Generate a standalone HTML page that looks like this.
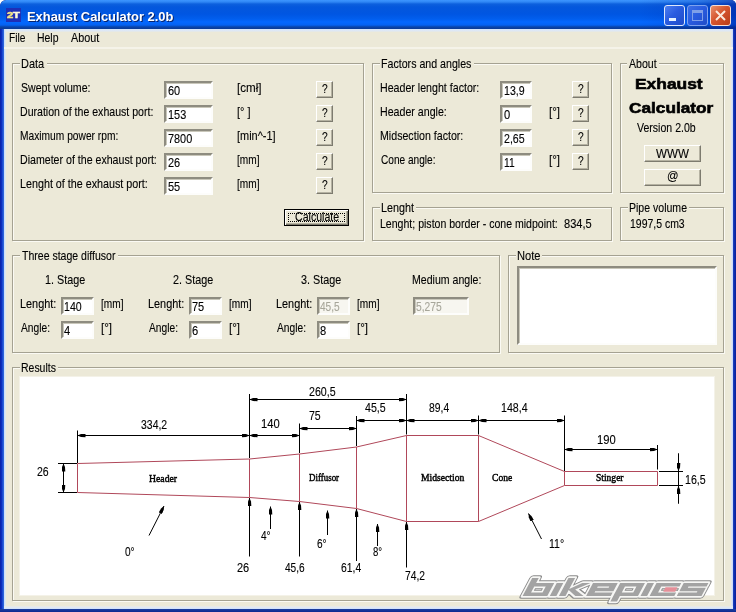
<!DOCTYPE html>
<html><head><meta charset="utf-8"><title>Exhaust Calculator 2.0b</title>
<style>
html,body{margin:0;padding:0;background:#fff;overflow:hidden}
body{width:736px;height:612px;position:relative;font-family:"Liberation Sans",sans-serif;font-size:13px}
#win{position:absolute;left:0;top:0;width:736px;height:612px;background:#0c2a9c;border-radius:6px 5px 0 0;overflow:hidden}
#title{position:absolute;left:0;top:0;width:736px;height:29px;border-radius:6px 5px 0 0;
 background:linear-gradient(to bottom,#3d95ff 0px,#2f86f4 2px,#0d60de 4px,#0457dc 7px,#0056e2 14px,#015eee 19px,#0468ff 22px,#0462f2 25px,#0a44a8 27px,#0a3a96 29px)}
#bl{position:absolute;left:0;top:29px;width:4px;height:583px;background:linear-gradient(to right,#0a1fa4,#0b2fc0 40%,#2a60da 80%,#2f68de)}
#br{position:absolute;left:733px;top:29px;width:3px;height:583px;background:linear-gradient(to right,#1c44c4,#0a28a8 60%,#0a1f98)}
#bb{position:absolute;left:0;top:609px;width:736px;height:3px;background:linear-gradient(to bottom,#1c3fa0,#0c2a90)}
#client{position:absolute;left:4px;top:29px;width:729px;height:580px;background:#ece9d8}
#menuline{position:absolute;left:4px;top:47px;width:729px;height:2px;background:#f5f3e9}
.edgeL{position:absolute;left:4px;top:29px;width:2px;height:580px;background:linear-gradient(to right,#c4dcfa,#e4ebee)}
.edgeR{position:absolute;left:731px;top:29px;width:2px;height:580px;background:linear-gradient(to right,#e8eaf0,#c4d6f6)}
.edgeT{position:absolute;left:4px;top:29px;width:729px;height:3px;background:linear-gradient(to bottom,#d4e6fd,#dfe8f4 60%,#e8e9e0)}
.edgeB{position:absolute;left:4px;top:606px;width:729px;height:3px;background:linear-gradient(to bottom,#eaeae2,#e0e8f4 50%,#cfe0fb)}
.grp{position:absolute;border:1px solid #a5a292;box-shadow:1px 1px 0 #fbfaf4, inset 1px 1px 0 #fbfaf4;box-sizing:content-box}
.glab{position:absolute;background:#ece9d8}
#txt{position:absolute;left:0;top:0;width:736px;height:612px;will-change:transform}
.t{position:absolute;white-space:pre;transform-origin:0 0;line-height:normal;display:block;-webkit-text-stroke:0.12px currentColor}
.inp{position:absolute;background:#fff;border-style:solid;border-width:2px;border-color:#8e8c80 #fdfdfb #fdfdfb #8e8c80;box-shadow:inset 1px 1px 0 #c9c7ba}
.inp.dis{background:#f7f6f0}
.btn{position:absolute;box-sizing:border-box;background:#ece9d8;border-style:solid;border-width:1px;border-color:#fff #7d7b6f #7d7b6f #fff;box-shadow:inset -1px -1px 0 #b5b2a2}
.btn.def{border:1px solid #000;box-shadow:inset 1px 1px 0 #fff, inset -1px -1px 0 #7d7b6f, inset -2px -2px 0 #b5b2a2}
.focus{position:absolute;border:1px dotted #000;box-sizing:border-box}
.panel{position:absolute;background:#fff;box-shadow:0 0 0 1px #f4f2e8}
.cap{position:absolute;top:5px;width:21px;height:21px;box-sizing:border-box;border:1px solid #dfe8fb;border-radius:3px}
#bmin{left:664px;background:linear-gradient(135deg,#4d7ff0 0%,#2a5ce0 45%,#1f4cc8 100%)}
#bmax{left:687px;background:linear-gradient(135deg,#3d6fe6 0%,#2a5ce0 45%,#1f4cc8 100%);border-color:#7fa2ee}
#bclose{left:710px;background:linear-gradient(135deg,#e8906c 0%,#d5552e 45%,#b83c18 100%);border-color:#f6ddd4}
#icon{position:absolute;left:6px;top:7.5px;width:15.3px;height:14px;background:#1f2fb6}
svg{position:absolute;left:0;top:0}
</style></head>
<body>
<div id="win">
 <div id="title"></div>
 <div style="position:absolute;left:640px;top:0;width:96px;height:29px;background:linear-gradient(to right,rgba(0,20,150,0) 0%,rgba(0,25,150,0.18) 60%,rgba(0,20,140,0.5) 100%)"></div>
 <div id="bl"></div><div id="br"></div><div id="bb"></div>
 <div id="client"></div>
 <div class="edgeT"></div><div class="edgeL"></div><div class="edgeR"></div><div class="edgeB"></div>
 <div id="menuline"></div>
 <div id="icon"></div>
 <span class="t" style="left:6.8px;top:9.9px;font-size:9px;font-weight:bold;color:#f3e684;transform:scaleX(1.25);-webkit-text-stroke:0.5px #f3e684;will-change:transform">2</span>
 <span class="t" style="left:13.4px;top:9.9px;font-size:9px;font-weight:bold;color:#fbf8d8;transform:scaleX(1.25);-webkit-text-stroke:0.5px #fbf8d8;will-change:transform">T</span>
 <div class="cap" id="bmin"><div style="position:absolute;left:4px;top:12px;width:7px;height:3px;background:#e8f4ff"></div></div>
 <div class="cap" id="bmax"><div style="position:absolute;left:4px;top:4px;width:11px;height:11px;box-sizing:border-box;border:1px solid #7f9fe8;border-top-width:3px"></div></div>
 <div class="cap" id="bclose"><svg width="19" height="19" viewBox="0 0 19 19" style="left:0;top:0"><path d="M5 5 L14 14 M14 5 L5 14" stroke="#fbe9dc" stroke-width="2" fill="none"/></svg></div>
<div class="grp" style="left:12px;top:63px;width:350px;height:176px"></div>
<div class="glab" style="left:19.5px;top:56px;width:27px;height:14px"></div>
<div class="grp" style="left:372px;top:63px;width:238px;height:128px"></div>
<div class="glab" style="left:379.5px;top:56px;width:94px;height:14px"></div>
<div class="grp" style="left:620px;top:63px;width:102px;height:128px"></div>
<div class="glab" style="left:627px;top:56px;width:32px;height:14px"></div>
<div class="grp" style="left:372px;top:207px;width:238px;height:32px"></div>
<div class="glab" style="left:379.5px;top:200px;width:36.5px;height:14px"></div>
<div class="grp" style="left:620px;top:207px;width:102px;height:32px"></div>
<div class="glab" style="left:627.5px;top:200px;width:61px;height:14px"></div>
<div class="grp" style="left:12px;top:255px;width:486px;height:96px"></div>
<div class="glab" style="left:19.5px;top:248px;width:98px;height:14px"></div>
<div class="grp" style="left:508px;top:255px;width:214px;height:96px"></div>
<div class="glab" style="left:515.5px;top:248px;width:26.5px;height:14px"></div>
<div class="grp" style="left:12px;top:367px;width:710px;height:232px"></div>
<div class="glab" style="left:19.5px;top:360px;width:38.5px;height:14px"></div>
<div class="inp" style="left:164px;top:81px;width:45px;height:14px"></div>
<div class="btn" style="left:316px;top:81px;width:17px;height:17px"></div>
<div class="inp" style="left:164px;top:105px;width:45px;height:14px"></div>
<div class="btn" style="left:316px;top:105px;width:17px;height:17px"></div>
<div class="inp" style="left:164px;top:129px;width:45px;height:14px"></div>
<div class="btn" style="left:316px;top:129px;width:17px;height:17px"></div>
<div class="inp" style="left:164px;top:153px;width:45px;height:14px"></div>
<div class="btn" style="left:316px;top:153px;width:17px;height:17px"></div>
<div class="inp" style="left:164px;top:177px;width:45px;height:14px"></div>
<div class="btn" style="left:316px;top:177px;width:17px;height:17px"></div>
<div class="btn def" style="left:284px;top:209px;width:65px;height:17px"></div>
<div class="inp" style="left:500px;top:81px;width:28px;height:14px"></div>
<div class="btn" style="left:572px;top:81px;width:17px;height:17px"></div>
<div class="inp" style="left:500px;top:105px;width:28px;height:14px"></div>
<div class="btn" style="left:572px;top:105px;width:17px;height:17px"></div>
<div class="inp" style="left:500px;top:129px;width:28px;height:14px"></div>
<div class="btn" style="left:572px;top:129px;width:17px;height:17px"></div>
<div class="inp" style="left:500px;top:153px;width:28px;height:14px"></div>
<div class="btn" style="left:572px;top:153px;width:17px;height:17px"></div>
<div class="btn" style="left:644px;top:145px;width:57px;height:17px"></div>
<div class="btn" style="left:644px;top:169px;width:57px;height:17px"></div>
<div class="inp" style="left:60.5px;top:297px;width:29.0px;height:14px"></div>
<div class="inp" style="left:60.5px;top:321px;width:29.0px;height:14px"></div>
<div class="inp" style="left:188.5px;top:297px;width:29.0px;height:14px"></div>
<div class="inp" style="left:188.5px;top:321px;width:29.0px;height:14px"></div>
<div class="inp dis" style="left:316.5px;top:297px;width:29.0px;height:14px"></div>
<div class="inp" style="left:316.5px;top:321px;width:29.0px;height:14px"></div>
<div class="inp dis" style="left:412.5px;top:297px;width:52.0px;height:14px"></div>
<div class="inp" style="left:517px;top:266px;width:196px;height:75px"></div>
<div class="panel" style="left:20px;top:377px;width:694px;height:218px"></div>
 <div class="focus" style="left:288px;top:213px;width:57px;height:9px"></div>
<svg width="736" height="612" viewBox="0 0 736 612">
<defs>
 <marker id="ah" viewBox="0 0 8 4" refX="8" refY="2" markerWidth="8" markerHeight="4" orient="auto-start-reverse" markerUnits="userSpaceOnUse"><path d="M0 0.2 L4.5 0.5 L8 2 L4.5 3.5 L0 3.8 Z" fill="#000"/></marker>
</defs>
<g stroke="#b0485a" stroke-width="1" fill="none" shape-rendering="auto">
 <path d="M77.5 463.5 L249.5 459 L299.5 454 L356.5 447 L406.5 435.5 L478.5 435.5 L564.5 471.5 L657.5 471.5 L657.5 485.5 L564.5 485.5 L478.5 521.5 L406.5 521.5 L356.5 508.5 L299.5 501.5 L249.5 497.5 L77.5 492.5 Z"/>
 <path d="M249.5 459 V497.5 M299.5 454 V501.5 M356.5 447 V508.5 M406.5 435.5 V521.5 M478.5 435.5 V521.5 M564.5 471.5 V485.5"/>
</g>
<g stroke="#000" stroke-width="1" fill="none">
 <!-- extension lines -->
 <path d="M77.5 430.5 V463 M249.5 394 V458 M299.5 423.5 V453 M356.5 416 V446 M406.5 394 V434.5 M478.5 415.5 V434.5 M564.5 415.5 V471 M657.5 445 V469.5"/>
 <!-- lower leaders -->
 <path d="M249.5 498.5 V556.5 M299.5 502.5 V556.5 M356.5 509.5 V561 M406.5 522.5 V567.5"/>
 <!-- 26 / 16,5 ticks -->
 <path d="M58 463.5 H77 M58 492.5 H77 M63.5 463.5 V492.5 M659 471.5 H683 M659 485.5 H683 M678.5 453.5 V503.5"/>
</g>
<g stroke="#000" stroke-width="1" fill="none" marker-start="url(#ah)" marker-end="url(#ah)">
 <path d="M77.5 435.5 H249.5"/><path d="M249.5 399.5 H406.5"/><path d="M249.5 435.5 H299.5"/><path d="M299.5 428.5 H356.5"/>
 <path d="M356.5 420.5 H406.5"/><path d="M406.5 420.5 H478.5"/><path d="M478.5 420.5 H564.5"/><path d="M564.5 449.5 H657.5"/>
 <path d="M63.5 463.5 V492.5"/>
</g>
<g stroke="#000" stroke-width="1" fill="none" marker-end="url(#ah)">
 <path d="M249.5 520 V498"/><path d="M299.5 520 V502"/><path d="M356.5 520 V509"/><path d="M406.5 540 V522"/>
 <path d="M270.5 529 V506.5"/><path d="M327.5 535 V510.5"/><path d="M377.5 546 V524"/>
 <path d="M149 535.5 L164 506"/><path d="M541.5 539 L528.5 513.5"/>
 <path d="M678.5 453.5 V471"/><path d="M678.5 503.5 V486"/>
</g>
</svg>

<svg width="736" height="612" viewBox="0 0 736 612">
<g transform="translate(520.0,596.0) skewX(-28)" stroke-linejoin="round">
 <path d="M2.60 -18.00 H9.20 V0.00 H2.60 Z M20.70 -13.00 H27.30 V0.00 H20.70 Z M2.60 -13.00 H27.30 V-9.60 H2.60 Z M2.60 -3.40 H27.30 V0.00 H2.60 Z M29.80 -13.00 H36.40 V0.00 H29.80 Z M38.90 -18.00 H45.50 V0.00 H38.90 Z M45.50 -7.00 L55.30 -13.00 L63.60 -13.00 L51.70 -6.50 L63.60 0.00 L55.30 0.00 L45.50 -6.00 Z M66.10 -13.00 H72.70 V0.00 H66.10 Z M66.10 -13.00 H90.80 V-9.60 H66.10 Z M66.10 -3.40 H90.80 V0.00 H66.10 Z M66.10 -8.20 H90.80 V-4.80 H66.10 Z M84.20 -13.00 H90.80 V-4.80 H84.20 Z M93.30 -13.00 H99.90 V5.50 H93.30 Z M111.40 -13.00 H118.00 V0.00 H111.40 Z M93.30 -13.00 H118.00 V-9.60 H93.30 Z M93.30 -3.40 H118.00 V0.00 H93.30 Z M120.50 -13.00 H127.10 V0.00 H120.50 Z M129.60 -13.00 H136.20 V0.00 H129.60 Z M129.60 -13.00 H154.30 V-9.60 H129.60 Z M129.60 -3.40 H154.30 V0.00 H129.60 Z M156.80 -13.00 H181.50 V-9.60 H156.80 Z M156.80 -8.20 H181.50 V-4.80 H156.80 Z M156.80 -3.40 H181.50 V0.00 H156.80 Z M156.80 -13.00 H163.40 V-4.80 H156.80 Z M174.90 -8.20 H181.50 V0.00 H174.90 Z" fill="#8b8b8b" stroke="#8b8b8b" stroke-width="5.6"/>
 <path d="M2.60 -18.00 H9.20 V0.00 H2.60 Z M20.70 -13.00 H27.30 V0.00 H20.70 Z M2.60 -13.00 H27.30 V-9.60 H2.60 Z M2.60 -3.40 H27.30 V0.00 H2.60 Z M29.80 -13.00 H36.40 V0.00 H29.80 Z M38.90 -18.00 H45.50 V0.00 H38.90 Z M45.50 -7.00 L55.30 -13.00 L63.60 -13.00 L51.70 -6.50 L63.60 0.00 L55.30 0.00 L45.50 -6.00 Z M66.10 -13.00 H72.70 V0.00 H66.10 Z M66.10 -13.00 H90.80 V-9.60 H66.10 Z M66.10 -3.40 H90.80 V0.00 H66.10 Z M66.10 -8.20 H90.80 V-4.80 H66.10 Z M84.20 -13.00 H90.80 V-4.80 H84.20 Z M93.30 -13.00 H99.90 V5.50 H93.30 Z M111.40 -13.00 H118.00 V0.00 H111.40 Z M93.30 -13.00 H118.00 V-9.60 H93.30 Z M93.30 -3.40 H118.00 V0.00 H93.30 Z M120.50 -13.00 H127.10 V0.00 H120.50 Z M129.60 -13.00 H136.20 V0.00 H129.60 Z M129.60 -13.00 H154.30 V-9.60 H129.60 Z M129.60 -3.40 H154.30 V0.00 H129.60 Z M156.80 -13.00 H181.50 V-9.60 H156.80 Z M156.80 -8.20 H181.50 V-4.80 H156.80 Z M156.80 -3.40 H181.50 V0.00 H156.80 Z M156.80 -13.00 H163.40 V-4.80 H156.80 Z M174.90 -8.20 H181.50 V0.00 H174.90 Z" fill="#f7f7f5" stroke="#f7f7f5" stroke-width="3.6"/>
 <path d="M140.90 -8.70 H152.90 V-4.30 H140.90 Z" fill="#e58f98"/>
 <path d="M2.60 -18.00 H9.20 V0.00 H2.60 Z M20.70 -13.00 H27.30 V0.00 H20.70 Z M2.60 -13.00 H27.30 V-9.60 H2.60 Z M2.60 -3.40 H27.30 V0.00 H2.60 Z M29.80 -13.00 H36.40 V0.00 H29.80 Z M38.90 -18.00 H45.50 V0.00 H38.90 Z M45.50 -7.00 L55.30 -13.00 L63.60 -13.00 L51.70 -6.50 L63.60 0.00 L55.30 0.00 L45.50 -6.00 Z M66.10 -13.00 H72.70 V0.00 H66.10 Z M66.10 -13.00 H90.80 V-9.60 H66.10 Z M66.10 -3.40 H90.80 V0.00 H66.10 Z M66.10 -8.20 H90.80 V-4.80 H66.10 Z M84.20 -13.00 H90.80 V-4.80 H84.20 Z M93.30 -13.00 H99.90 V5.50 H93.30 Z M111.40 -13.00 H118.00 V0.00 H111.40 Z M93.30 -13.00 H118.00 V-9.60 H93.30 Z M93.30 -3.40 H118.00 V0.00 H93.30 Z M120.50 -13.00 H127.10 V0.00 H120.50 Z M129.60 -13.00 H136.20 V0.00 H129.60 Z M129.60 -13.00 H154.30 V-9.60 H129.60 Z M129.60 -3.40 H154.30 V0.00 H129.60 Z M156.80 -13.00 H181.50 V-9.60 H156.80 Z M156.80 -8.20 H181.50 V-4.80 H156.80 Z M156.80 -3.40 H181.50 V0.00 H156.80 Z M156.80 -13.00 H163.40 V-4.80 H156.80 Z M174.90 -8.20 H181.50 V0.00 H174.90 Z" fill="#a3a3a3"/>
</g>
</svg>
<div id="txt">
<span class="t" style="left:20.66px;top:56.23px;font-family:'Liberation Sans';font-size:13px;color:#000;transform:scaleX(0.8447)">Data</span>
<span class="t" style="left:380.68px;top:56.23px;font-family:'Liberation Sans';font-size:13px;color:#000;transform:scaleX(0.8177)">Factors and angles</span>
<span class="t" style="left:629.00px;top:56.23px;font-family:'Liberation Sans';font-size:13px;color:#000;transform:scaleX(0.8149)">About</span>
<span class="t" style="left:380.67px;top:200.24px;font-family:'Liberation Sans';font-size:13px;color:#000;transform:scaleX(0.8301)">Lenght</span>
<span class="t" style="left:628.69px;top:200.24px;font-family:'Liberation Sans';font-size:13px;color:#000;transform:scaleX(0.8107)">Pipe volume</span>
<span class="t" style="left:21.50px;top:248.24px;font-family:'Liberation Sans';font-size:13px;color:#000;transform:scaleX(0.8100)">Three stage diffusor</span>
<span class="t" style="left:516.64px;top:248.24px;font-family:'Liberation Sans';font-size:13px;color:#000;transform:scaleX(0.8578)">Note</span>
<span class="t" style="left:20.69px;top:360.24px;font-family:'Liberation Sans';font-size:13px;color:#000;transform:scaleX(0.8052)">Results</span>
<span class="t" style="left:20.50px;top:80.23px;font-family:'Liberation Sans';font-size:13px;color:#000;transform:scaleX(0.8151)">Swept volume:</span>
<span class="t" style="left:167.50px;top:83.23px;font-family:'Liberation Sans';font-size:13px;color:#000;transform:scaleX(0.8433)">60</span>
<span class="t" style="left:236.50px;top:80.23px;font-family:'Liberation Sans';font-size:13px;color:#000;transform:scaleX(0.8946)">[cmł]</span>
<span class="t" style="left:321.50px;top:80.73px;font-family:'Liberation Sans';font-size:13px;color:#000;transform:scaleX(0.7857)">?</span>
<span class="t" style="left:19.69px;top:104.23px;font-family:'Liberation Sans';font-size:13px;color:#000;transform:scaleX(0.8127)">Duration of the exhaust port:</span>
<span class="t" style="left:167.50px;top:107.23px;font-family:'Liberation Sans';font-size:13px;color:#000;transform:scaleX(0.8388)">153</span>
<span class="t" style="left:236.50px;top:104.23px;font-family:'Liberation Sans';font-size:13px;color:#000;transform:scaleX(0.8429)">[° ]</span>
<span class="t" style="left:321.50px;top:104.73px;font-family:'Liberation Sans';font-size:13px;color:#000;transform:scaleX(0.7857)">?</span>
<span class="t" style="left:19.71px;top:128.24px;font-family:'Liberation Sans';font-size:13px;color:#000;transform:scaleX(0.7864)">Maximum power rpm:</span>
<span class="t" style="left:167.50px;top:131.24px;font-family:'Liberation Sans';font-size:13px;color:#000;transform:scaleX(0.8365)">7800</span>
<span class="t" style="left:236.50px;top:128.24px;font-family:'Liberation Sans';font-size:13px;color:#000;transform:scaleX(0.8404)">[min^-1]</span>
<span class="t" style="left:321.50px;top:128.74px;font-family:'Liberation Sans';font-size:13px;color:#000;transform:scaleX(0.7857)">?</span>
<span class="t" style="left:19.68px;top:152.24px;font-family:'Liberation Sans';font-size:13px;color:#000;transform:scaleX(0.8161)">Diameter of the exhaust port:</span>
<span class="t" style="left:167.50px;top:155.24px;font-family:'Liberation Sans';font-size:13px;color:#000;transform:scaleX(0.8433)">26</span>
<span class="t" style="left:236.50px;top:152.24px;font-family:'Liberation Sans';font-size:13px;color:#000;transform:scaleX(0.7782)">[mm]</span>
<span class="t" style="left:321.50px;top:152.74px;font-family:'Liberation Sans';font-size:13px;color:#000;transform:scaleX(0.7857)">?</span>
<span class="t" style="left:19.67px;top:176.24px;font-family:'Liberation Sans';font-size:13px;color:#000;transform:scaleX(0.8265)">Lenght of the exhaust port:</span>
<span class="t" style="left:167.50px;top:179.24px;font-family:'Liberation Sans';font-size:13px;color:#000;transform:scaleX(0.8433)">55</span>
<span class="t" style="left:236.50px;top:176.24px;font-family:'Liberation Sans';font-size:13px;color:#000;transform:scaleX(0.7782)">[mm]</span>
<span class="t" style="left:321.50px;top:176.74px;font-family:'Liberation Sans';font-size:13px;color:#000;transform:scaleX(0.7857)">?</span>
<span class="t" style="left:294.50px;top:208.74px;font-family:'Liberation Sans';font-size:13px;color:#000;transform:scaleX(0.8153)">Calculate</span>
<span class="t" style="left:379.68px;top:80.23px;font-family:'Liberation Sans';font-size:13px;color:#000;transform:scaleX(0.8181)">Header lenght factor:</span>
<span class="t" style="left:503.50px;top:83.23px;font-family:'Liberation Sans';font-size:13px;color:#000;transform:scaleX(0.8177)">13,9</span>
<span class="t" style="left:577.50px;top:80.73px;font-family:'Liberation Sans';font-size:13px;color:#000;transform:scaleX(0.7857)">?</span>
<span class="t" style="left:379.68px;top:104.23px;font-family:'Liberation Sans';font-size:13px;color:#000;transform:scaleX(0.8182)">Header angle:</span>
<span class="t" style="left:503.50px;top:107.23px;font-family:'Liberation Sans';font-size:13px;color:#000;transform:scaleX(0.8571)">0</span>
<span class="t" style="left:548.50px;top:104.23px;font-family:'Liberation Sans';font-size:13px;color:#000;transform:scaleX(0.8890)">[°]</span>
<span class="t" style="left:577.50px;top:104.73px;font-family:'Liberation Sans';font-size:13px;color:#000;transform:scaleX(0.7857)">?</span>
<span class="t" style="left:379.68px;top:128.24px;font-family:'Liberation Sans';font-size:13px;color:#000;transform:scaleX(0.8179)">Midsection factor:</span>
<span class="t" style="left:503.50px;top:131.24px;font-family:'Liberation Sans';font-size:13px;color:#000;transform:scaleX(0.8177)">2,65</span>
<span class="t" style="left:577.50px;top:128.74px;font-family:'Liberation Sans';font-size:13px;color:#000;transform:scaleX(0.7857)">?</span>
<span class="t" style="left:380.50px;top:152.24px;font-family:'Liberation Sans';font-size:13px;color:#000;transform:scaleX(0.7770)">Cone angle:</span>
<span class="t" style="left:503.50px;top:155.24px;font-family:'Liberation Sans';font-size:13px;color:#000;transform:scaleX(0.7915)">11</span>
<span class="t" style="left:548.50px;top:152.24px;font-family:'Liberation Sans';font-size:13px;color:#000;transform:scaleX(0.8890)">[°]</span>
<span class="t" style="left:577.50px;top:152.74px;font-family:'Liberation Sans';font-size:13px;color:#000;transform:scaleX(0.7857)">?</span>
<span class="t" style="left:379.69px;top:216.24px;font-family:'Liberation Sans';font-size:13px;color:#000;transform:scaleX(0.8120)">Lenght; piston border - cone midpoint:</span>
<span class="t" style="left:564.00px;top:216.24px;font-family:'Liberation Sans';font-size:13px;color:#000;transform:scaleX(0.8513)">834,5</span>
<span class="t" style="left:629.50px;top:216.24px;font-family:'Liberation Sans';font-size:13px;color:#000;transform:scaleX(0.8050)">1997,5 cm3</span>
<span class="t" style="left:635.34px;top:75.42px;font-family:'Liberation Sans';font-size:15px;color:#000;font-weight:bold;-webkit-text-stroke:0.6px #000;transform:scaleX(1.1594)">Exhaust</span>
<span class="t" style="left:629.00px;top:99.42px;font-family:'Liberation Sans';font-size:15px;color:#000;font-weight:bold;-webkit-text-stroke:0.6px #000;transform:scaleX(1.1494)">Calculator</span>
<span class="t" style="left:636.50px;top:120.23px;font-family:'Liberation Sans';font-size:13px;color:#000;transform:scaleX(0.8120)">Version 2.0b</span>
<span class="t" style="left:656.00px;top:145.74px;font-family:'Liberation Sans';font-size:13px;color:#000;transform:scaleX(0.8924)">WWW</span>
<span class="t" style="left:667.12px;top:168.24px;font-family:'Liberation Sans';font-size:13px;color:#000;transform:scaleX(0.8750)">@</span>
<span class="t" style="left:44.50px;top:272.24px;font-family:'Liberation Sans';font-size:13px;color:#000;transform:scaleX(0.8299)">1. Stage</span>
<span class="t" style="left:19.66px;top:296.24px;font-family:'Liberation Sans';font-size:13px;color:#000;transform:scaleX(0.8381)">Lenght:</span>
<span class="t" style="left:20.50px;top:320.24px;font-family:'Liberation Sans';font-size:13px;color:#000;transform:scaleX(0.7862)">Angle:</span>
<span class="t" style="left:100.50px;top:296.24px;font-family:'Liberation Sans';font-size:13px;color:#000;transform:scaleX(0.7782)">[mm]</span>
<span class="t" style="left:100.50px;top:320.24px;font-family:'Liberation Sans';font-size:13px;color:#000;transform:scaleX(0.8890)">[°]</span>
<span class="t" style="left:172.50px;top:272.24px;font-family:'Liberation Sans';font-size:13px;color:#000;transform:scaleX(0.8299)">2. Stage</span>
<span class="t" style="left:147.66px;top:296.24px;font-family:'Liberation Sans';font-size:13px;color:#000;transform:scaleX(0.8381)">Lenght:</span>
<span class="t" style="left:148.50px;top:320.24px;font-family:'Liberation Sans';font-size:13px;color:#000;transform:scaleX(0.7862)">Angle:</span>
<span class="t" style="left:228.50px;top:296.24px;font-family:'Liberation Sans';font-size:13px;color:#000;transform:scaleX(0.7782)">[mm]</span>
<span class="t" style="left:228.50px;top:320.24px;font-family:'Liberation Sans';font-size:13px;color:#000;transform:scaleX(0.8890)">[°]</span>
<span class="t" style="left:300.50px;top:272.24px;font-family:'Liberation Sans';font-size:13px;color:#000;transform:scaleX(0.8299)">3. Stage</span>
<span class="t" style="left:275.66px;top:296.24px;font-family:'Liberation Sans';font-size:13px;color:#000;transform:scaleX(0.8381)">Lenght:</span>
<span class="t" style="left:276.50px;top:320.24px;font-family:'Liberation Sans';font-size:13px;color:#000;transform:scaleX(0.7862)">Angle:</span>
<span class="t" style="left:356.50px;top:296.24px;font-family:'Liberation Sans';font-size:13px;color:#000;transform:scaleX(0.7782)">[mm]</span>
<span class="t" style="left:356.50px;top:320.24px;font-family:'Liberation Sans';font-size:13px;color:#000;transform:scaleX(0.8890)">[°]</span>
<span class="t" style="left:64.00px;top:299.24px;font-family:'Liberation Sans';font-size:13px;color:#000;transform:scaleX(0.8155)">140</span>
<span class="t" style="left:64.00px;top:323.24px;font-family:'Liberation Sans';font-size:13px;color:#000;transform:scaleX(0.8571)">4</span>
<span class="t" style="left:192.00px;top:299.24px;font-family:'Liberation Sans';font-size:13px;color:#000;transform:scaleX(0.8433)">75</span>
<span class="t" style="left:192.00px;top:323.24px;font-family:'Liberation Sans';font-size:13px;color:#000;transform:scaleX(0.8571)">6</span>
<span class="t" style="left:320.00px;top:299.24px;font-family:'Liberation Sans';font-size:13px;color:#a7a69a;transform:scaleX(0.7778)">45,5</span>
<span class="t" style="left:320.00px;top:323.24px;font-family:'Liberation Sans';font-size:13px;color:#000;transform:scaleX(0.8571)">8</span>
<span class="t" style="left:411.69px;top:272.24px;font-family:'Liberation Sans';font-size:13px;color:#000;transform:scaleX(0.8129)">Medium angle:</span>
<span class="t" style="left:416.00px;top:299.24px;font-family:'Liberation Sans';font-size:13px;color:#a7a69a;transform:scaleX(0.7894)">5,275</span>
<span class="t" style="left:8.71px;top:29.73px;font-family:'Liberation Sans';font-size:13px;color:#000;transform:scaleX(0.7861)">File</span>
<span class="t" style="left:36.70px;top:29.73px;font-family:'Liberation Sans';font-size:13px;color:#000;transform:scaleX(0.8037)">Help</span>
<span class="t" style="left:70.50px;top:29.73px;font-family:'Liberation Sans';font-size:13px;color:#000;transform:scaleX(0.8294)">About</span>
<span class="t" style="left:26.50px;top:8.73px;font-family:'Liberation Sans';font-size:13px;color:#fff;font-weight:bold;text-shadow:1px 1px 0 #0a246a;-webkit-text-stroke:0;transform:scaleX(0.9936)">Exhaust Calculator 2.0b</span>
<span class="t" style="left:36.50px;top:464.24px;font-family:'Liberation Sans';font-size:13px;color:#000;transform:scaleX(0.8082)">26</span>
<span class="t" style="left:141.00px;top:416.74px;font-family:'Liberation Sans';font-size:13px;color:#000;transform:scaleX(0.8049)">334,2</span>
<span class="t" style="left:309.00px;top:384.24px;font-family:'Liberation Sans';font-size:13px;color:#000;transform:scaleX(0.8204)">260,5</span>
<span class="t" style="left:260.50px;top:416.24px;font-family:'Liberation Sans';font-size:13px;color:#000;transform:scaleX(0.8621)">140</span>
<span class="t" style="left:309.00px;top:407.74px;font-family:'Liberation Sans';font-size:13px;color:#000;transform:scaleX(0.8082)">75</span>
<span class="t" style="left:365.00px;top:399.74px;font-family:'Liberation Sans';font-size:13px;color:#000;transform:scaleX(0.8177)">45,5</span>
<span class="t" style="left:428.50px;top:399.74px;font-family:'Liberation Sans';font-size:13px;color:#000;transform:scaleX(0.7977)">89,4</span>
<span class="t" style="left:500.50px;top:399.74px;font-family:'Liberation Sans';font-size:13px;color:#000;transform:scaleX(0.8204)">148,4</span>
<span class="t" style="left:596.50px;top:431.74px;font-family:'Liberation Sans';font-size:13px;color:#000;transform:scaleX(0.8621)">190</span>
<span class="t" style="left:684.50px;top:471.74px;font-family:'Liberation Sans';font-size:13px;color:#000;transform:scaleX(0.8177)">16,5</span>
<span class="t" style="left:237.00px;top:560.24px;font-family:'Liberation Sans';font-size:13px;color:#000;transform:scaleX(0.8433)">26</span>
<span class="t" style="left:285.20px;top:560.24px;font-family:'Liberation Sans';font-size:13px;color:#000;transform:scaleX(0.7778)">45,6</span>
<span class="t" style="left:341.00px;top:560.24px;font-family:'Liberation Sans';font-size:13px;color:#000;transform:scaleX(0.7977)">61,4</span>
<span class="t" style="left:405.30px;top:568.24px;font-family:'Liberation Sans';font-size:13px;color:#000;transform:scaleX(0.7897)">74,2</span>
<span class="t" style="left:124.50px;top:544.24px;font-family:'Liberation Sans';font-size:13px;color:#000;transform:scaleX(0.7768)">0°</span>
<span class="t" style="left:261.00px;top:528.24px;font-family:'Liberation Sans';font-size:13px;color:#000;transform:scaleX(0.7768)">4°</span>
<span class="t" style="left:316.50px;top:535.74px;font-family:'Liberation Sans';font-size:13px;color:#000;transform:scaleX(0.7768)">6°</span>
<span class="t" style="left:372.70px;top:543.74px;font-family:'Liberation Sans';font-size:13px;color:#000;transform:scaleX(0.7359)">8°</span>
<span class="t" style="left:549.00px;top:536.24px;font-family:'Liberation Sans';font-size:13px;color:#000;transform:scaleX(0.8110)">11°</span>
<span class="t" style="left:149.00px;top:472.64px;font-family:'Liberation Serif';font-size:10.5px;color:#000;-webkit-text-stroke:0.45px #000;transform:scaleX(0.9249)">Header</span>
<span class="t" style="left:309.00px;top:472.14px;font-family:'Liberation Serif';font-size:10.5px;color:#000;-webkit-text-stroke:0.45px #000;transform:scaleX(0.8498)">Diffusor</span>
<span class="t" style="left:421.00px;top:472.14px;font-family:'Liberation Serif';font-size:10.5px;color:#000;-webkit-text-stroke:0.45px #000;transform:scaleX(0.9168)">Midsection</span>
<span class="t" style="left:492.00px;top:472.14px;font-family:'Liberation Serif';font-size:10.5px;color:#000;-webkit-text-stroke:0.45px #000;transform:scaleX(0.9110)">Cone</span>
<span class="t" style="left:596.00px;top:472.14px;font-family:'Liberation Serif';font-size:10.5px;color:#000;-webkit-text-stroke:0.45px #000;transform:scaleX(0.9081)">Stinger</span>
</div>
</div>
</body></html>
